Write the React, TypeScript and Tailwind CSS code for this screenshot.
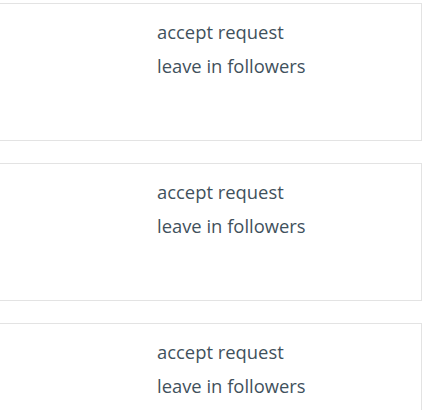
export default function App() {
  const rows = [0, 1, 2];
  return (
    <div className="bg-white w-[440px] h-[410px] overflow-hidden pt-[3px] font-['Open_Sans',sans-serif]">
      {rows.map((r) => (
        <div
          key={r}
          className="ml-[-10px] w-[432px] h-[138px] mb-[22px] border border-[#e3e3e3] bg-white pl-[166px] pt-[11px]"
        >
          <div className="flex flex-col text-[18.4px] leading-[34px] text-[#3f515c]">
            <span>accept request</span>
            <span>leave in followers</span>
          </div>
        </div>
      ))}
    </div>
  );
}
